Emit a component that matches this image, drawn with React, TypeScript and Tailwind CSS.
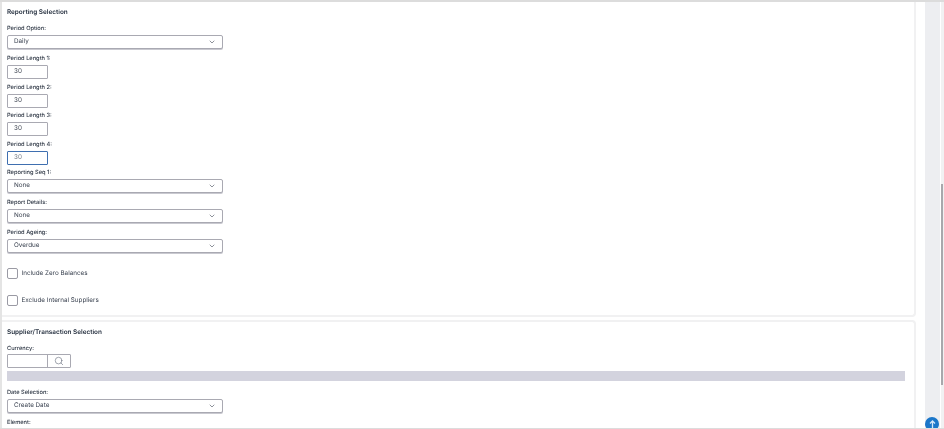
import { ChevronDown, Search } from "lucide-react";

const Label = ({ children, className = "" }: { children: string; className?: string }) => (
  <div className={`h-[9px] leading-[9px] text-[5.7px] font-medium text-[#2b3442] ${className}`}>{children}</div>
);

const Select = ({ value, h = "h-[14px]" }: { value: string; h?: string }) => (
  <div className={`${h} w-[216px] mt-[2px] shrink-0 flex items-center justify-between border border-[#a9a9b2] rounded-[2px] bg-white pl-[6px] pr-[6px] shadow-[0_1px_0_#c9c9d0]`}>
    <span className="text-[6.3px] text-[#3a4250]">{value}</span>
    <ChevronDown size={8} className="text-[#555b66]" strokeWidth={2} />
  </div>
);

const Input = ({ focused = false }: { focused?: boolean }) => (
  <div className={`h-[14px] w-[41px] mt-[2px] shrink-0 flex items-center pl-[6px] rounded-[1px] bg-white border ${focused ? "border-[#3f6fb0] border-[1.5px]" : "border-[#a9a9b2]"}`}>
    <span className={`text-[6.3px] ${focused ? "text-[#7c828c]" : "text-[#4a505c]"}`}>30</span>
  </div>
);

const Check = ({ label, className = "" }: { label: string; className?: string }) => (
  <div className={`flex items-center gap-[3.5px] h-[11px] ${className}`}>
    <div className="w-[11px] h-[11px] border border-[#9a9aa4] rounded-[2px] bg-white" />
    <span className="text-[6.3px] text-[#3a4250]">{label}</span>
  </div>
);

const Title = ({ children }: { children: string }) => (
  <div className="h-[10px] leading-[10px] text-[6.4px] font-semibold text-[#1f2a3a]">{children}</div>
);

export default function App() {
  return (
    <div className="w-[944px] h-[429px] overflow-hidden bg-white flex border-t-2 border-b border-[#dcdcdc] antialiased blur-[0.3px] [text-rendering:geometricPrecision] [font-family:Inter,'Noto_Sans',sans-serif]">
      <div className="w-[916px] shrink-0 flex flex-col gap-[3px] border-l-2 border-[#e4e4e4]">
        <div className="h-[315px] shrink-0 border-r-2 border-b-2 border-[#f1f1f2] rounded-br-[4px] pl-[5px] pt-[4.5px] flex flex-col">
          <Title>Reporting Selection</Title>
          <Label className="mt-[7.5px]">Period Option:</Label>
          <Select value="Daily" />
          <Label className="mt-[5px]">Period Length 1:</Label>
          <Input />
          <Label className="mt-[3.5px]">Period Length 2:</Label>
          <Input />
          <Label className="mt-[3.5px]">Period Length 3:</Label>
          <Input />
          <Label className="mt-[3.5px]">Period Length 4:</Label>
          <Input focused />
          <Label className="mt-[3.5px]">Reporting Seq 1:</Label>
          <Select value="None" />
          <Label className="mt-[4.5px]">Report Details:</Label>
          <Select value="None" />
          <Label className="mt-[5.5px]">Period Ageing:</Label>
          <Select value="Overdue" />
          <Check label="Include Zero Balances" className="mt-[15px]" />
          <Check label="Exclude Internal Suppliers" className="mt-[16px]" />
        </div>
        <div className="flex-1 min-h-0 border-r-2 border-t-2 border-[#f1f1f2] rounded-tr-[4px] pl-[5px] pt-[5px] flex flex-col">
          <Title>Supplier/Transaction Selection</Title>
          <Label className="mt-[6.5px]">Currency:</Label>
          <div className="flex mt-[1px] w-[64px] h-[14px] shrink-0 border border-[#a9a9b2] rounded-[1px]">
            <div className="w-[40px] border-r border-[#a9a9b2]" />
            <div className="flex-1 flex items-center justify-center">
              <Search size={10} className="text-[#6b7280]" strokeWidth={1.5} />
            </div>
          </div>
          <div className="h-[10px] w-[898px] mt-[3.5px] shrink-0 bg-[#d3d3de]" />
          <Label className="mt-[6.5px]">Date Selection:</Label>
          <Select value="Create Date" />
          <Label className="mt-[5px]">Element:</Label>
        </div>
      </div>
      <div className="flex-1 relative overflow-hidden">
        <div className="absolute left-[9px] w-[15px] top-0 bottom-0 bg-[#edeef1]" />
        <div className="absolute right-0 top-0 bottom-0 w-[3px] bg-[#f1f1f2]" />
        <div className="absolute right-[1px] top-[182px] h-[201px] w-[2px] bg-[#a8a8ac]" />
        <div className="absolute left-[9px] top-[415px] w-[14px] h-[14px] rounded-full bg-[#1b76c9] flex items-center justify-center">
          <svg width="7" height="9" viewBox="0 0 7 9" fill="none" stroke="#d5e7f8" strokeWidth="1.3"><path d="M3.5 9V1M1 3.5 3.5 1 6 3.5" /></svg>
        </div>
      </div>
    </div>
  );
}
